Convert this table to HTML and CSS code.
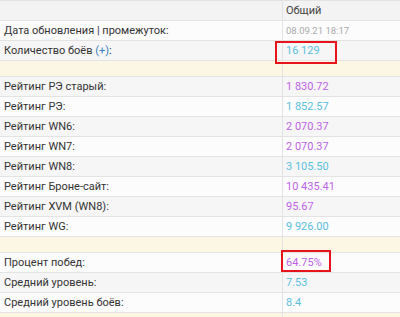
FILE: index.html
```html
<!DOCTYPE html>
<html lang="ru">
<head>
    <meta charset="UTF-8">
    <meta name="viewport" content="width=device-width, initial-scale=1.0">
    <title>Статистика игрока</title>
    <link rel="stylesheet" href="styles.css">
</head>
<body>

<table class="stats">
    <tr class="head">
        <td class="label"></td>
        <td class="value">Общий</td>
    </tr>
    <tr>
        <td class="label">Дата обновления | промежуток:</td>
        <td class="value date">08.09.21 18:17</td>
    </tr>
    <tr>
        <td class="label">Количество боёв <a href="#" class="more">(+)</a>:</td>
        <td class="value cyan"><span class="mark mark-battles">16 129</span></td>
    </tr>
    <tr class="gap"><td class="label"></td><td></td></tr>
    <tr>
        <td class="label">Рейтинг РЭ старый:</td>
        <td class="value purple">1 830.72</td>
    </tr>
    <tr>
        <td class="label">Рейтинг РЭ:</td>
        <td class="value cyan">1 852.57</td>
    </tr>
    <tr>
        <td class="label">Рейтинг WN6:</td>
        <td class="value purple">2 070.37</td>
    </tr>
    <tr>
        <td class="label">Рейтинг WN7:</td>
        <td class="value purple">2 070.37</td>
    </tr>
    <tr>
        <td class="label">Рейтинг WN8:</td>
        <td class="value cyan">3 105.50</td>
    </tr>
    <tr>
        <td class="label">Рейтинг Броне-сайт:</td>
        <td class="value purple">10 435.41</td>
    </tr>
    <tr>
        <td class="label">Рейтинг XVM (WN8):</td>
        <td class="value purple">95.67</td>
    </tr>
    <tr>
        <td class="label">Рейтинг WG:</td>
        <td class="value cyan">9 926.00</td>
    </tr>
    <tr class="gap"><td class="label"></td><td></td></tr>
    <tr>
        <td class="label">Процент побед:</td>
        <td class="value purple"><span class="mark mark-wins">64.75%</span></td>
    </tr>
    <tr>
        <td class="label">Средний уровень:</td>
        <td class="value cyan">7.53</td>
    </tr>
    <tr>
        <td class="label">Средний уровень боёв:</td>
        <td class="value cyan">8.4</td>
    </tr>
    <tr class="gap"><td class="label"></td><td></td></tr>
</table>

</body>
</html>
```

FILE: styles.css
```css
body {
    margin: 0;
    padding: 0;
    background-color: #fff;
    font-family: Roboto, "Liberation Sans", sans-serif;
    font-size: 11px;
    color: #333;
}

.stats {
    width: 100%;
    border-collapse: collapse;
    border-top: 1px solid #e3e3e3;
}

.stats td {
    height: 19px;
    padding: 0 4px;
    border-bottom: 1px solid #e3e3e3;
    white-space: nowrap;
    line-height: 19px;
}

.stats tr:nth-child(odd) td {
    background-color: #f6f6f6;
}

.stats tr:nth-child(even) td {
    background-color: #fcfcfc;
}

.stats tr.head td {
    background-color: #f3f3f3;
    color: #444;
}

.stats tr.gap td {
    height: 15px;
    background-color: #fcf6e4;
}

.stats td.label {
    width: 274px;
    border-right: 1px solid #e3e3e3;
}

.stats td.value {
    padding-left: 3px;
}

.stats td.date {
    font-size: 9.5px;
    color: #aaa;
}

.cyan {
    color: #5bbfe0;
}

.purple {
    color: #be64e8;
}

.more {
    color: #3a7fc4;
    text-decoration: none;
}

/* red frame drawn over the highlighted figures */
.mark {
    position: relative;
}

.mark::after {
    content: "";
    position: absolute;
    border: 2px solid #e8141c;
}

.mark-battles::after {
    left: -11px;
    right: -17px;
    top: -3px;
    bottom: -7px;
}

.mark-wins::after {
    left: -5px;
    right: -9px;
    top: -6px;
    bottom: -3px;
}
```
